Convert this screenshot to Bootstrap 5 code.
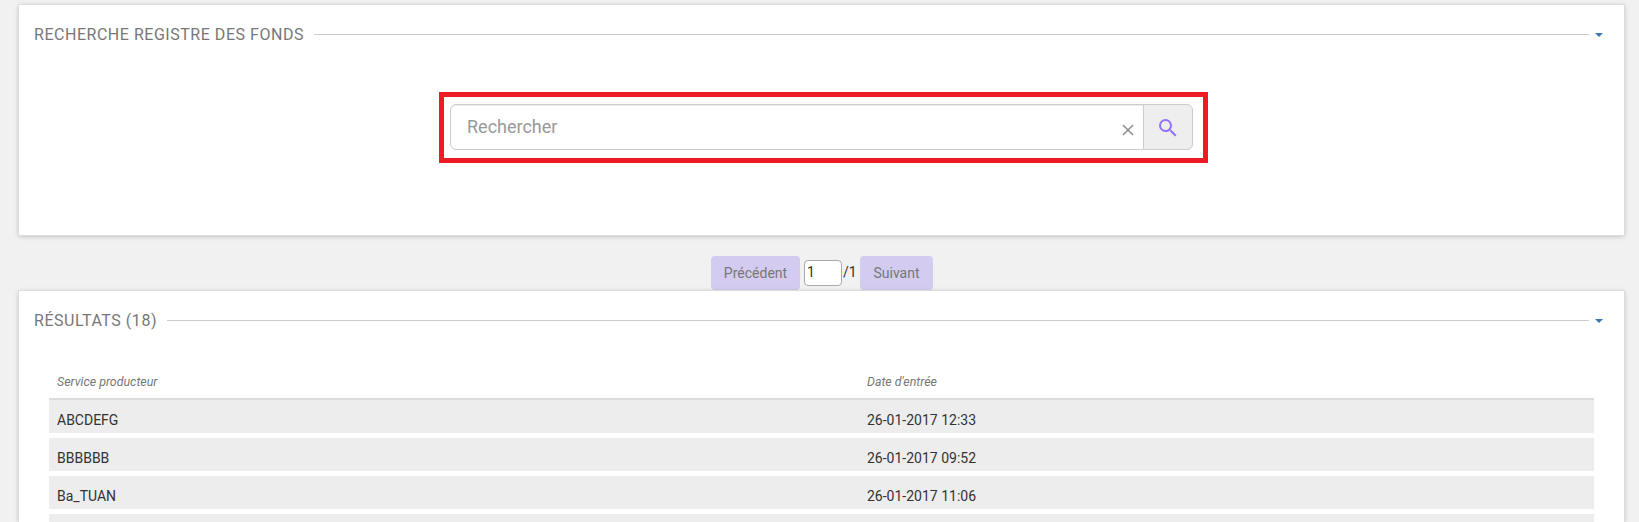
<!DOCTYPE html>
<html lang="fr">
<head>
<meta charset="utf-8">
<title>Recherche registre des fonds</title>
<link rel="stylesheet" href="https://cdn.jsdelivr.net/npm/bootstrap@5.3.0/dist/css/bootstrap.min.css">
<style>
html, body { height: 522px; overflow: hidden; }
body { background: #f1f1f1; color: #333; font: 14px/20px Roboto, sans-serif; padding: 5px 15px 0 19px; }
.panel { background: #fff; box-shadow: 0 0 0 1px #dcdcdc, 0 1px 5px rgba(0,0,0,.26); position: relative; }
.panel-search { height: 230px; }
.panel-results { height: 231px; overflow: hidden; }
.panel-title { height: 59px; padding: 0 21px 0 15px; }
.panel-title h2 { font-size: 16px; line-height: 21px; font-weight: 400; letter-spacing: .53px; color: #777; }
.panel-title svg { margin-top: 1px; }
.rule { height: 1px; background: #ccc; margin: 0 6px 0 10px; }
.highlight { width: 769px; height: 71px; border: 5px solid #ed1c24; margin: 28px 0 0 420px; padding: 7px 10px 0 6px; }
.search-group { height: 46px; }
.search-group .form-control { height: 46px; font-size: 18px; line-height: 24px; padding: 9px 16px 11px; border-color: #ccc; border-radius: 6px 0 0 6px; box-shadow: inset 0 1px 1px rgba(0,0,0,.075); }
.search-group .form-control::placeholder { color: #999; }
.search-btn { width: 50px; background: #eee; border: 1px solid #ccc; border-radius: 0 6px 6px 0; padding: 1px 0 0; }
.clear-icon { position: absolute; z-index: 6; left: 673px; top: 20px; }
.pager { width: 222px; height: 35px; margin: 21px 0 0 692px; }
.pager .btn { height: 34px; background: #d3ccf0; color: #777; border: 0; border-radius: 4px; font-size: 14px; line-height: 20px; padding: 7px 0; }
.btn-prev { width: 89px; }
.btn-next { width: 73px; }
.page-input { width: 38px; height: 26px; border: 1px solid #a9a9a9; border-radius: 4px; padding: 0 0 3px 2px; margin: 4px 1px 0 4px; font-size: 14px; color: #333; background: #fff; }
.page-total { margin-top: 6px; }
.registry { width: 1545px; margin: 0 0 0 30px; table-layout: fixed; border-collapse: separate; border-spacing: 0; line-height: 20px; }
.registry th { height: 50px; padding: 15px 8px 0; font-size: 12.4px; font-weight: 400; font-style: italic; color: #777; border-bottom: 2px solid #ddd; vertical-align: middle; }
.registry td { height: 38px; padding: 10px 8px 3px; background: #ededed; border-bottom: 5px solid #fff; vertical-align: top; }
.col-service { width: 810px; }
</style>
</head>
<body>
<section class="panel panel-search">
  <div class="panel-title d-flex align-items-center">
    <h2 class="m-0">RECHERCHE REGISTRE DES FONDS</h2>
    <div class="rule flex-grow-1"></div>
    <svg width="8" height="4" viewBox="0 0 8 4"><path d="M0 0h8L4 4z" fill="#337ab7"/></svg>
  </div>
  <div class="highlight">
    <div class="input-group search-group flex-nowrap">
      <input class="form-control" type="text" placeholder="Rechercher">
      <svg class="clear-icon" width="12" height="12" viewBox="0 0 12 12"><path d="M1 1l10 10M11 1L1 11" stroke="#8c8c8c" stroke-width="1.5"/></svg>
      <button class="search-btn d-flex align-items-center justify-content-center" type="button" aria-label="Rechercher">
        <svg width="24" height="24" viewBox="0 0 24 24" fill="#9072ff"><path d="M15.5 14h-.79l-.28-.27A6.47 6.47 0 0 0 16 9.5 6.5 6.5 0 1 0 9.5 16c1.61 0 3.09-.59 4.23-1.57l.27.28v.79l5 4.99L20.49 19l-4.99-5zm-6 0C7.01 14 5 11.99 5 9.5S7.01 5 9.5 5 14 7.01 14 9.5 11.99 14 9.5 14z"/></svg>
      </button>
    </div>
  </div>
</section>
<div class="pager d-flex align-items-start">
  <button class="btn btn-prev" type="button">Précédent</button>
  <input class="page-input" type="text" value="1">
  <span class="page-total">/1</span>
  <button class="btn btn-next ms-auto" type="button">Suivant</button>
</div>
<section class="panel panel-results">
  <div class="panel-title d-flex align-items-center">
    <h2 class="m-0">RÉSULTATS (18)</h2>
    <div class="rule flex-grow-1"></div>
    <svg width="8" height="4" viewBox="0 0 8 4"><path d="M0 0h8L4 4z" fill="#337ab7"/></svg>
  </div>
  <table class="registry">
    <colgroup><col class="col-service"><col></colgroup>
    <thead><tr><th>Service producteur</th><th>Date d'entrée</th></tr></thead>
    <tbody>
      <tr><td>ABCDEFG</td><td>26-01-2017 12:33</td></tr>
      <tr><td>BBBBBB</td><td>26-01-2017 09:52</td></tr>
      <tr><td>Ba_TUAN</td><td>26-01-2017 11:06</td></tr>
      <tr><td></td><td></td></tr>
    </tbody>
  </table>
</section>
<script src="https://cdn.jsdelivr.net/npm/bootstrap@5.3.0/dist/js/bootstrap.bundle.min.js"></script>
</body>
</html>
